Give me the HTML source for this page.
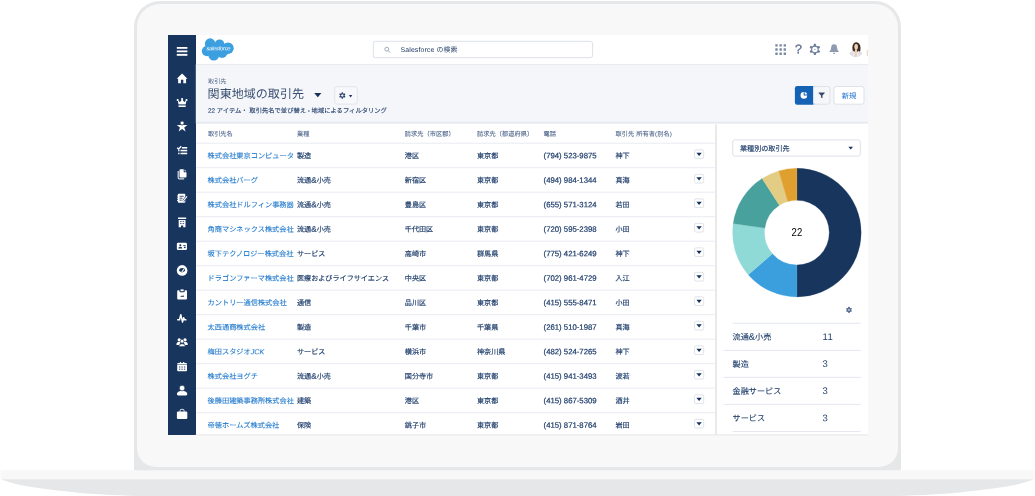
<!DOCTYPE html>
<html lang="ja">
<head>
<meta charset="utf-8">
<title>関東地域の取引先 | Salesforce</title>
<style>
html,body{margin:0;padding:0;background:#fff;}
body{width:1035px;height:496px;position:relative;overflow:hidden;font-family:"Liberation Sans","Noto Sans CJK JP",sans-serif;color:#16325c;-webkit-font-smoothing:antialiased;}
*{box-sizing:border-box;}
.abs{position:absolute;}
#bezel{position:absolute;left:134px;top:1px;width:767px;height:470px;background:#e6e7e9;border-radius:26px 26px 2px 2px;}
#bezelin{position:absolute;left:137px;top:4px;width:761px;height:462.5px;background:#f8f8f8;border-radius:23px 23px 19px 19px;}
#base{position:absolute;left:0;top:470px;width:1035px;height:26px;}
#screen{position:absolute;left:168px;top:35px;width:700px;height:400px;background:#fff;overflow:hidden;filter:blur(0.3px);}
#side{position:absolute;left:0;top:0;width:27.8px;height:100%;background:#18355e;}
#side svg{position:absolute;overflow:visible;}
#hdr{position:absolute;left:27.8px;top:0;right:0;height:29.2px;background:#fff;}
#phdr{position:absolute;left:27.8px;top:30.2px;right:0;height:57px;background:#f4f6f9;}
.t{position:absolute;white-space:nowrap;line-height:1;text-rendering:geometricPrecision;}
.th{font-size:6.2px;color:#4d658b;-webkit-text-stroke:0.08px #4d658b;}
.td{font-size:7.1px;color:#1b3a69;-webkit-text-stroke:0.15px #1b3a69;}
.lk{font-size:7.2px;color:#1f78cc;-webkit-text-stroke:0.1px #1f78cc;}
.ph{font-size:7.75px;color:#1b3a69;-webkit-text-stroke:0.2px #1b3a69;}
.lg{font-size:8.15px;color:#1b3a69;-webkit-text-stroke:0.1px #1b3a69;}
.lgn{font-size:9.5px;color:#1b3a69;}
.amp{font-size:1.15em;line-height:0;}
</style>
</head>
<body>
<div id="bezel"></div>
<div id="bezelin"></div>
<svg id="base" viewBox="0 0 1035 26" width="1035" height="26"><g transform="translate(0,0.25)">
<rect x="0.6" y="0" width="1033.8" height="9.2" rx="1" fill="#f8f8f8"/>
<path d="M0.7,9 L0.7,9.0 L5,10.6 L10,12.0 L15,13.5 L20,14.8 L30,16.6 L40,18.1 L50,19.3 L60,20.4 L70,21.6 L80,22.7 L90,23.5 L100,24.1 L110,24.7 L120,25.1 L130,25.5 L140,25.8 L150,26 L885,26 L885,26 L895,25.8 L905,25.5 L915,25.1 L925,24.7 L935,24.1 L945,23.5 L955,22.7 L965,21.6 L975,20.4 L985,19.3 L995,18.1 L1005,16.6 L1015,14.8 L1020,13.5 L1025,12.0 L1030,10.6 L1034.3,9.0 Z" fill="#e6e7e9"/>
</g></svg>
<div class="abs" style="left:196px;top:435px;width:672px;height:0.8px;background:#f1f1f3"></div>
<div id="screen">

<div id="side"><svg style="left:0;top:0" width="28" height="400" viewBox="0 0 28 400">
<g transform="translate(8.80,12.00) scale(1.0000,1.0000)"><rect x="0" y="0" width="10.6" height="1.8" fill="#fff"/><rect x="0" y="3.45" width="10.6" height="1.8" fill="#fff"/><rect x="0" y="6.9" width="10.6" height="1.9" fill="#fff"/></g>
<g transform="translate(8.50,38.10) scale(0.4667,0.4609)"><path d="M12 1 L23.5 12.2 L20.5 12.2 L20.5 22 L14.6 22 L14.6 14.6 L9.4 14.6 L9.4 22 L3.5 22 L3.5 12.2 L0.5 12.2 Z" fill="#fff"/></g>
<g transform="translate(8.60,62.70) scale(0.5000,0.4947)"><circle cx="2.2" cy="4.6" r="2.1" fill="#fff"/><circle cx="11" cy="2.6" r="2.2" fill="#fff"/><circle cx="19.8" cy="4.6" r="2.1" fill="#fff"/><path d="M2.2 5 L6.6 8.6 L11 3.2 L15.4 8.6 L19.8 5 L18.2 13 L3.8 13 Z" fill="#fff"/><rect x="3.8" y="14.4" width="14.4" height="1.5" fill="#fff"/><rect x="3.8" y="16.8" width="14.4" height="2" fill="#fff"/></g>
<g transform="translate(8.70,86.00) scale(0.4909,0.4909)"><path d="M0.2 8.2 L21.8 8.2 L15.4 13.2 L18 21.6 L11 16.4 L4 21.6 L6.6 13.2 Z" fill="#fff"/><circle cx="11" cy="4.2" r="4.1" fill="#fff" stroke="#18355e" stroke-width="1.6"/></g>
<g transform="translate(9.00,110.90) scale(0.5000,0.5000)"><path d="M0.4 3.8 L3.2 6.4 L8.4 0.8" fill="none" stroke="#fff" stroke-width="2.6"/><rect x="9.8" y="2.2" width="10.6" height="3.1" fill="#fff"/><rect x="2" y="7.8" width="3.2" height="3.1" fill="#fff" opacity=".85"/><rect x="7" y="7.8" width="13.4" height="3.1" fill="#fff"/><rect x="2" y="13.6" width="3.2" height="3.1" fill="#fff" opacity=".85"/><rect x="7" y="13.6" width="13.4" height="3.1" fill="#fff"/></g>
<g transform="translate(8.90,134.00) scale(0.5000,0.5000)"><path d="M2.6 4 L2.6 17.4 Q2.6 19.6 4.8 19.6 L14.5 19.6" fill="none" stroke="#fff" stroke-width="2.4" opacity=".85"/><path d="M7 0.6 L13.6 0.6 L13.6 5.4 Q13.6 6.4 14.6 6.4 L19.2 6.4 L19.2 15 Q19.2 16.8 17.4 16.8 L7 16.8 Q5.2 16.8 5.2 15 L5.2 2.4 Q5.2 0.6 7 0.6 Z" fill="#fff"/><path d="M15.4 0.9 L19 4.6 L15.4 4.6 Z" fill="#fff"/></g>
<g transform="translate(9.00,158.30) scale(0.5000,0.5000)"><path d="M3.6 0.8 L14.6 0.8 Q16.6 0.8 16.6 2.8 L16.6 16.8 Q16.6 18.8 14.6 18.8 L3.6 18.8 Q1.6 18.8 1.6 16.8 L1.6 15.4 L0.4 15.4 L0.4 13.2 L1.6 13.2 L1.6 10.9 L0.4 10.9 L0.4 8.7 L1.6 8.7 L1.6 6.4 L0.4 6.4 L0.4 4.2 L1.6 4.2 L1.6 2.8 Q1.6 0.8 3.6 0.8 Z" fill="#fff"/><rect x="5" y="5" width="8.4" height="1.7" fill="#18355e"/><rect x="5" y="8.9" width="6" height="1.7" fill="#18355e"/><rect x="5" y="12.8" width="4.4" height="1.7" fill="#18355e"/><path d="M12.4 15.4 L20 6.2" stroke="#18355e" stroke-width="4.6" fill="none"/><path d="M12.6 15.2 L20 6.2" stroke="#fff" stroke-width="2.3" fill="none"/></g>
<g transform="translate(9.90,182.30) scale(0.5000,0.5000)"><rect x="0.2" y="0.2" width="16.4" height="3.3" rx="0.6" fill="#fff"/><path d="M1.6 5.2 L15.2 5.2 L15.2 20 L10.6 20 L10.6 16.2 L6.2 16.2 L6.2 20 L1.6 20 Z" fill="#fff"/><rect x="4.4" y="7.2" width="3" height="2.2" fill="#18355e" opacity=".75"/><rect x="9.4" y="7.2" width="3" height="2.2" fill="#18355e" opacity=".75"/><rect x="4.4" y="11.4" width="3" height="2.2" fill="#18355e" opacity=".75"/><rect x="9.4" y="11.4" width="3" height="2.2" fill="#18355e" opacity=".75"/></g>
<g transform="translate(8.70,207.60) scale(0.5000,0.5000)"><rect x="0.3" y="0.3" width="20.2" height="14.6" rx="2.4" fill="#fff"/><circle cx="7.2" cy="5.2" r="2.1" fill="#18355e"/><path d="M3.2 11.8 Q3.2 8.4 7.2 8.4 Q11.2 8.4 11.2 11.8 Z" fill="#18355e"/><rect x="13" y="5" width="4.8" height="1.6" fill="#18355e"/><rect x="14.4" y="8.2" width="3.4" height="2.8" fill="#18355e"/></g>
<g transform="translate(8.70,230.00) scale(0.5000,0.5000)"><circle cx="10.8" cy="10.8" r="10.6" fill="#fff"/><path d="M4.7 12 A6.1 6.1 0 0 1 16.9 12 Q14 12.3 12.4 14.6 L9.2 14.6 Q7.6 12.3 4.7 12 Z" fill="#18355e"/><path d="M9.4 13.2 L14 7.4 L15.4 8.5 L11.2 14.6 Z" fill="#fff"/></g>
<g transform="translate(9.00,254.00) scale(0.5000,0.5000)"><path d="M2.4 2.6 L5 2.6 L5 4.4 Q5 6.4 7 6.4 L13.4 6.4 Q15.4 6.4 15.4 4.4 L15.4 2.6 L18 2.6 Q20 2.6 20 4.6 L20 19.2 Q20 21.2 18 21.2 L2.4 21.2 Q0.4 21.2 0.4 19.2 L0.4 4.6 Q0.4 2.6 2.4 2.6 Z" fill="#fff"/><rect x="6.4" y="0.2" width="7.6" height="4.8" rx="1.6" fill="#fff" stroke="#18355e" stroke-width="1.3"/><path d="M6.4 15.8 L8.6 13.2 L10.6 14.4 L12.2 11.6 L14.6 15.8 Z" fill="#18355e" opacity=".8"/></g>
<g transform="translate(8.90,278.90) scale(0.5000,0.5000)"><path d="M0.6 11.6 L5.2 11.6 L7.8 1.6 L11.2 16.4 L13.6 7.6 L15.2 11.6 L19 11.6" fill="none" stroke="#fff" stroke-width="2.9" stroke-linejoin="round"/></g>
<g transform="translate(8.20,302.70) scale(0.5000,0.5000)"><circle cx="6" cy="4.2" r="3.3" fill="#fff"/><circle cx="17.6" cy="4.2" r="3.3" fill="#fff"/><path d="M0.4 12.2 Q1.4 8 6 8 Q8 8 8.6 9 L6 14.4 L0.8 14.4 Z" fill="#fff"/><path d="M23.2 12.2 Q22.2 8 17.6 8 Q15.6 8 15 9 L17.6 14.4 L22.8 14.4 Z" fill="#fff"/><circle cx="11.8" cy="7" r="3.7" fill="#fff" stroke="#18355e" stroke-width="1.2"/><path d="M5.4 17.8 Q5.6 12.6 11.8 12.2 Q18 12.6 18.2 17.8 Z" fill="#fff" stroke="#18355e" stroke-width="1"/></g>
<g transform="translate(9.00,326.60) scale(0.5000,0.5000)"><path d="M2.4 2.6 L5 2.6 L7 0.4 L9 2.6 L11.4 2.6 L13.4 0.4 L15.4 2.6 L18 2.6 Q20 2.6 20 4.6 L20 5.6 L0.4 5.6 L0.4 4.6 Q0.4 2.6 2.4 2.6 Z" fill="#fff"/><path d="M0.4 7 L20 7 L20 17.2 Q20 19.2 18 19.2 L2.4 19.2 Q0.4 19.2 0.4 17.2 Z" fill="#fff"/><g fill="#18355e" opacity=".8"><rect x="4" y="9.6" width="2.6" height="2.4"/><rect x="8.9" y="9.6" width="2.6" height="2.4"/><rect x="13.8" y="9.6" width="2.6" height="2.4"/><rect x="4" y="14" width="2.6" height="2.4"/><rect x="8.9" y="14" width="2.6" height="2.4"/><rect x="13.8" y="14" width="2.6" height="2.4"/></g></g>
<g transform="translate(8.70,350.30) scale(0.5000,0.5000)"><path d="M0.4 17.6 Q0.8 12.8 7.4 11.6 L14.2 11.6 Q20.8 12.8 21.2 17.6 Q21.2 20.4 18.6 20.4 L3 20.4 Q0.4 20.4 0.4 17.6 Z" fill="#fff"/><circle cx="10.8" cy="5.6" r="5.6" fill="#fff" stroke="#18355e" stroke-width="1.4"/></g>
<g transform="translate(8.70,373.90) scale(0.5000,0.5000)"><path d="M6.8 5.6 L6.8 3.4 Q6.8 1 9.2 1 L12.4 1 Q14.8 1 14.8 3.4 L14.8 5.6" fill="none" stroke="#fff" stroke-width="1.8"/><rect x="0.4" y="5.4" width="20.8" height="15" rx="2.2" fill="#fff"/></g>
</svg></div>
<div id="hdr"></div>
<div id="phdr"></div>
<svg class="abs" style="left:0;top:0" width="700" height="400" viewBox="0 0 700 400"><rect x="27.8" y="29.10" width="673" height="1.5" fill="#e6e9f0"/><rect x="27.8" y="30.20" width="673" height="56.6" fill="#f4f6f9"/><rect x="27.8" y="86.70" width="673" height="2.0" fill="#e7eaf0"/><rect x="27.8" y="399.1" width="673" height="1" fill="#eeeef1"/><g transform="translate(33.80,3.40) scale(0.07257)" fill="#3b9fe0"><circle cx="115" cy="72" r="73"/><circle cx="245" cy="80" r="65"/><circle cx="360" cy="135" r="80"/><circle cx="70" cy="175" r="70"/><circle cx="165" cy="230" r="75"/><circle cx="280" cy="200" r="70"/><rect x="70" y="80" width="290" height="140"/></g><rect x="205.30" y="6.30" width="219.30" height="16.40" rx="2.2" fill="#fff" stroke="#dce0e8" stroke-width="1.0"/><rect x="698.80" y="15.10" width="1.3" height="5.8" rx="0.5" fill="#e6dbd0"/><rect x="166.70" y="51.70" width="22.60" height="17.40" rx="2.4" fill="#f7f8fb" stroke="#e1e5eb" stroke-width="1.0"/><rect x="645.50" y="51.55" width="16.40" height="17.65" rx="2.2" fill="#f6f7f9" stroke="#dde1e8" stroke-width="1.0"/><rect x="626.90" y="51.05" width="20.10" height="18.65" rx="2.2" fill="#1561b4"/><rect x="645.15" y="52.05" width="2.85" height="16.65" rx="0" fill="#f6f7f9"/><rect x="645.15" y="51.05" width="3" height="1" fill="#dde1e8"/><rect x="645.15" y="68.70" width="3" height="1" fill="#dde1e8"/><rect x="665.90" y="51.55" width="30.10" height="17.65" rx="2.2" fill="#fff" stroke="#dde1e8" stroke-width="1.0"/><rect x="28.00" y="107.65" width="519.50" height="1.1" fill="#eaedf3"/><rect x="526.50" y="114.85" width="9.20" height="8.70" rx="1.6" fill="#fff" stroke="#dfe3ea" stroke-width="1.0"/><path d="M528.40,117.65 h5.4 l-2.7,3.3 Z" fill="#16325c"/><rect x="28.00" y="132.15" width="519.50" height="1.1" fill="#eaedf3"/><rect x="526.50" y="139.35" width="9.20" height="8.70" rx="1.6" fill="#fff" stroke="#dfe3ea" stroke-width="1.0"/><path d="M528.40,142.15 h5.4 l-2.7,3.3 Z" fill="#16325c"/><rect x="28.00" y="156.65" width="519.50" height="1.1" fill="#eaedf3"/><rect x="526.50" y="163.85" width="9.20" height="8.70" rx="1.6" fill="#fff" stroke="#dfe3ea" stroke-width="1.0"/><path d="M528.40,166.65 h5.4 l-2.7,3.3 Z" fill="#16325c"/><rect x="28.00" y="181.15" width="519.50" height="1.1" fill="#eaedf3"/><rect x="526.50" y="188.35" width="9.20" height="8.70" rx="1.6" fill="#fff" stroke="#dfe3ea" stroke-width="1.0"/><path d="M528.40,191.15 h5.4 l-2.7,3.3 Z" fill="#16325c"/><rect x="28.00" y="205.65" width="519.50" height="1.1" fill="#eaedf3"/><rect x="526.50" y="212.85" width="9.20" height="8.70" rx="1.6" fill="#fff" stroke="#dfe3ea" stroke-width="1.0"/><path d="M528.40,215.65 h5.4 l-2.7,3.3 Z" fill="#16325c"/><rect x="28.00" y="230.15" width="519.50" height="1.1" fill="#eaedf3"/><rect x="526.50" y="237.35" width="9.20" height="8.70" rx="1.6" fill="#fff" stroke="#dfe3ea" stroke-width="1.0"/><path d="M528.40,240.15 h5.4 l-2.7,3.3 Z" fill="#16325c"/><rect x="28.00" y="254.65" width="519.50" height="1.1" fill="#eaedf3"/><rect x="526.50" y="261.85" width="9.20" height="8.70" rx="1.6" fill="#fff" stroke="#dfe3ea" stroke-width="1.0"/><path d="M528.40,264.65 h5.4 l-2.7,3.3 Z" fill="#16325c"/><rect x="28.00" y="279.15" width="519.50" height="1.1" fill="#eaedf3"/><rect x="526.50" y="286.35" width="9.20" height="8.70" rx="1.6" fill="#fff" stroke="#dfe3ea" stroke-width="1.0"/><path d="M528.40,289.15 h5.4 l-2.7,3.3 Z" fill="#16325c"/><rect x="28.00" y="303.65" width="519.50" height="1.1" fill="#eaedf3"/><rect x="526.50" y="310.85" width="9.20" height="8.70" rx="1.6" fill="#fff" stroke="#dfe3ea" stroke-width="1.0"/><path d="M528.40,313.65 h5.4 l-2.7,3.3 Z" fill="#16325c"/><rect x="28.00" y="328.15" width="519.50" height="1.1" fill="#eaedf3"/><rect x="526.50" y="335.35" width="9.20" height="8.70" rx="1.6" fill="#fff" stroke="#dfe3ea" stroke-width="1.0"/><path d="M528.40,338.15 h5.4 l-2.7,3.3 Z" fill="#16325c"/><rect x="28.00" y="352.65" width="519.50" height="1.1" fill="#eaedf3"/><rect x="526.50" y="359.85" width="9.20" height="8.70" rx="1.6" fill="#fff" stroke="#dfe3ea" stroke-width="1.0"/><path d="M528.40,362.65 h5.4 l-2.7,3.3 Z" fill="#16325c"/><rect x="28.00" y="377.15" width="519.50" height="1.1" fill="#eaedf3"/><rect x="526.50" y="384.35" width="9.20" height="8.70" rx="1.6" fill="#fff" stroke="#dfe3ea" stroke-width="1.0"/><path d="M528.40,387.15 h5.4 l-2.7,3.3 Z" fill="#16325c"/><rect x="547.10" y="89.60" width="1.8" height="320" fill="#e7e7e8"/><rect x="564.70" y="104.90" width="127.60" height="16.20" rx="2.2" fill="#fff" stroke="#dce0e8" stroke-width="1.0"/><rect x="564.60" y="287.75" width="128.00" height="1.1" fill="#e6e9f1"/><rect x="555.60" y="314.85" width="137.00" height="1.1" fill="#e6e9f1"/><rect x="555.60" y="341.85" width="137.00" height="1.1" fill="#e6e9f1"/><rect x="555.60" y="368.85" width="137.00" height="1.1" fill="#e6e9f1"/><rect x="564.60" y="395.95" width="128.00" height="1.1" fill="#e6e9f1"/><g transform="translate(216.20,11.60) scale(0.53333,0.53333) translate(-0.00,-0.00)"><circle cx="4.8" cy="4.8" r="3.6" fill="none" stroke="#8a96ab" stroke-width="1.5"/><path d="M7.4 7.4 L11.2 11.2" stroke="#8a96ab" stroke-width="1.7"/></g><g transform="translate(607.30,9.20) scale(1.00000,1.00000) translate(-0.00,-0.00)"><rect x="0" y="0" width="2.4" height="2.4" rx="0.3" fill="#7888a4"/><rect x="0" y="4.15" width="2.4" height="2.4" rx="0.3" fill="#7888a4"/><rect x="0" y="8.3" width="2.4" height="2.4" rx="0.3" fill="#7888a4"/><rect x="4.15" y="0" width="2.4" height="2.4" rx="0.3" fill="#7888a4"/><rect x="4.15" y="4.15" width="2.4" height="2.4" rx="0.3" fill="#7888a4"/><rect x="4.15" y="8.3" width="2.4" height="2.4" rx="0.3" fill="#7888a4"/><rect x="8.3" y="0" width="2.4" height="2.4" rx="0.3" fill="#7888a4"/><rect x="8.3" y="4.15" width="2.4" height="2.4" rx="0.3" fill="#7888a4"/><rect x="8.3" y="8.3" width="2.4" height="2.4" rx="0.3" fill="#7888a4"/></g><g transform="translate(641.30,8.80) scale(1.00000,1.00000) translate(5.60,5.60)"><path d="M-0.8,-5.55 L0.8,-5.55 L1.5,-3.5 L-1.5,-3.5 Z" fill="#6a7b9a" transform="rotate(0)"/><path d="M-0.8,-5.55 L0.8,-5.55 L1.5,-3.5 L-1.5,-3.5 Z" fill="#6a7b9a" transform="rotate(60)"/><path d="M-0.8,-5.55 L0.8,-5.55 L1.5,-3.5 L-1.5,-3.5 Z" fill="#6a7b9a" transform="rotate(120)"/><path d="M-0.8,-5.55 L0.8,-5.55 L1.5,-3.5 L-1.5,-3.5 Z" fill="#6a7b9a" transform="rotate(180)"/><path d="M-0.8,-5.55 L0.8,-5.55 L1.5,-3.5 L-1.5,-3.5 Z" fill="#6a7b9a" transform="rotate(240)"/><path d="M-0.8,-5.55 L0.8,-5.55 L1.5,-3.5 L-1.5,-3.5 Z" fill="#6a7b9a" transform="rotate(300)"/><circle r="3.25" fill="none" stroke="#6a7b9a" stroke-width="1.05"/><circle r="0.7" fill="#6a7b9a" opacity=".7"/></g><g transform="translate(661.20,9.00) scale(0.50000,0.50000) translate(-0.00,-0.00)"><path d="M9.8 0.6 Q15.4 0.8 15.6 7 Q15.8 12.2 19 14.6 L19 15.8 L0.6 15.8 L0.6 14.6 Q3.8 12.2 4 7 Q4.2 0.8 9.8 0.6 Z" fill="#8e9ab0"/><path d="M7.4 17.4 L12.2 17.4 Q12 20 9.8 20 Q7.6 20 7.4 17.4 Z" fill="#8e9ab0"/></g><g transform="translate(680.10,6.70) scale(0.51333,0.51333) translate(-0.00,-0.00)">
<defs><clipPath id="av"><circle cx="15" cy="15" r="15"/></clipPath></defs>
<g clip-path="url(#av)"><rect width="30" height="30" fill="#fff"/>
<path d="M0 30 Q1 20.5 10 17.6 L15 22 L21 17.6 Q29 20.5 30 30 Z" fill="#dddde2"/>
<path d="M9.6 19 Q6.4 8 11 3.4 Q16 -1 21 3.6 Q25.6 8 23.6 18.6 L20 19.4 L12 19.4 Z" fill="#3d2a21"/>
<ellipse cx="15.7" cy="9.8" rx="3.5" ry="5.6" fill="#f0d3b8"/>
<path d="M12 5.6 Q15.6 2.6 19.6 6.4 Q18 2.6 15.4 2.8 Q12.8 3 12 5.6 Z" fill="#3d2a21"/>
<path d="M13.4 14.6 L17.6 14.6 L17 22 L16.4 30 L12.4 30 L13 22 Z" fill="#efcdae"/>
<path d="M10 17.8 L13.2 20 L12.4 30 L9 30 Z" fill="#e9e9ee"/><path d="M21 17.8 L17.4 20 L16.8 30 L21 30 Z" fill="#e9e9ee"/>
</g></g><g transform="translate(146.20,58.00) scale(1.00000,1.00000) translate(-0.00,-0.00)"><path d="M0 0 L7.2 0 L3.6 4.2 Z" fill="#16325c"/></g><g transform="translate(171.00,57.20) scale(1.00000,1.00000) translate(3.30,3.30)"><path d="M-0.45,-3.3 L0.45,-3.3 L1.1,-1.7 L-1.1,-1.7 Z" fill="#1d3760" transform="rotate(0)"/><path d="M-0.45,-3.3 L0.45,-3.3 L1.1,-1.7 L-1.1,-1.7 Z" fill="#1d3760" transform="rotate(60)"/><path d="M-0.45,-3.3 L0.45,-3.3 L1.1,-1.7 L-1.1,-1.7 Z" fill="#1d3760" transform="rotate(120)"/><path d="M-0.45,-3.3 L0.45,-3.3 L1.1,-1.7 L-1.1,-1.7 Z" fill="#1d3760" transform="rotate(180)"/><path d="M-0.45,-3.3 L0.45,-3.3 L1.1,-1.7 L-1.1,-1.7 Z" fill="#1d3760" transform="rotate(240)"/><path d="M-0.45,-3.3 L0.45,-3.3 L1.1,-1.7 L-1.1,-1.7 Z" fill="#1d3760" transform="rotate(300)"/><circle r="1.65" fill="none" stroke="#1d3760" stroke-width="1.0"/></g><g transform="translate(180.90,60.10) scale(1.00000,1.00000) translate(-0.00,-0.00)"><path d="M0 0 L3.4 0 L1.7 2.3 Z" fill="#1d3760"/></g><g transform="translate(632.45,57.00) scale(0.50000,0.50000) translate(-0.00,-0.00)"><circle cx="6.8" cy="6.8" r="6.6" fill="#fff"/><path d="M7.5 0.4 L7.5 6.1 L13.2 6.1" fill="none" stroke="#1561b4" stroke-width="2.1"/></g><g transform="translate(650.55,57.40) scale(0.46324,0.45455) translate(-0.00,-0.00)"><path d="M0.4 0.4 L13.2 0.4 L13.2 1.6 L8.4 6.8 L8.4 12.8 L5.2 11 L5.2 6.8 L0.4 1.6 Z" fill="#394b6b"/></g><g transform="translate(680.40,111.70) scale(1.00000,1.00000) translate(-0.00,-0.00)"><path d="M0 0 L4.6 0 L2.3 2.8 Z" fill="#16325c"/></g><g transform="translate(677.90,271.80) scale(1.00000,1.00000) translate(3.10,3.10)" opacity=".9"><path d="M-0.5,-3.05 L0.5,-3.05 L1.15,-1.6 L-1.15,-1.6 Z" fill="#3a5580" transform="rotate(0)"/><path d="M-0.5,-3.05 L0.5,-3.05 L1.15,-1.6 L-1.15,-1.6 Z" fill="#3a5580" transform="rotate(60)"/><path d="M-0.5,-3.05 L0.5,-3.05 L1.15,-1.6 L-1.15,-1.6 Z" fill="#3a5580" transform="rotate(120)"/><path d="M-0.5,-3.05 L0.5,-3.05 L1.15,-1.6 L-1.15,-1.6 Z" fill="#3a5580" transform="rotate(180)"/><path d="M-0.5,-3.05 L0.5,-3.05 L1.15,-1.6 L-1.15,-1.6 Z" fill="#3a5580" transform="rotate(240)"/><path d="M-0.5,-3.05 L0.5,-3.05 L1.15,-1.6 L-1.15,-1.6 Z" fill="#3a5580" transform="rotate(300)"/><circle r="1.7" fill="#9fb0c9" stroke="#3a5580" stroke-width="1.0"/></g></svg>
<div class="t" style="left:38px;top:12px;transform:translate(0.40px,0.30px) rotate(0.04deg);font-size:5.7px;font-style:italic;color:#fff;letter-spacing:-0.2px;font-family:'Liberation Sans',sans-serif">salesforce</div>
<div class="t" style="left:232px;top:13px;transform:translate(0.60px,0.10px) rotate(0.04deg);font-size:6.9px;color:#16325c;letter-spacing:0.12px">Salesforce の検索</div>
<div class="t" style="left:627px;top:8px;transform:translate(0.00px,0.20px) rotate(0.04deg);font-size:12.4px;color:#5f7192;-webkit-text-stroke:0.35px #5f7192;font-family:'Liberation Sans',sans-serif">?</div>
<div class="t" style="left:40px;top:44px;transform:translate(0.00px,0.40px) rotate(0.04deg);font-size:6.2px;color:#54698d">取引先</div>
<div class="t" style="left:39px;top:53px;transform:translate(0.60px,0.05px) rotate(0.04deg);font-size:12.05px;color:#3a5072;font-weight:400">関東地域の取引先</div>
<div class="t" style="left:40px;top:73px;transform:translate(0.00px,0.70px) rotate(0.04deg);font-size:6.31px;color:#2c4772;-webkit-text-stroke:0.15px #2c4772">22 アイテム・ 取引先名で並び替え - 地域によるフィルタリング</div>
<div class="t" style="left:673px;top:57px;transform:translate(0.70px,0.40px) rotate(0.04deg);font-size:7.4px;color:#1a6fd0">新規</div>
<div class="t th" style="left:40px;top:97px;transform:translate(0.00px,0.05px) rotate(0.04deg)">取引先名</div>
<div class="t th" style="left:129px;top:97px;transform:translate(0.00px,0.05px) rotate(0.04deg)">業種</div>
<div class="t th" style="left:236px;top:97px;transform:translate(0.80px,0.05px) rotate(0.04deg);letter-spacing:0.05px">請求先（市区郡）</div>
<div class="t th" style="left:309px;top:97px;transform:translate(0.00px,0.05px) rotate(0.04deg);letter-spacing:0.05px">請求先（都道府県）</div>
<div class="t th" style="left:375px;top:97px;transform:translate(0.60px,0.05px) rotate(0.04deg)">電話</div>
<div class="t th" style="left:447px;top:97px;transform:translate(0.50px,0.05px) rotate(0.04deg);letter-spacing:0.1px">取引先 所有者(別名)</div>
<div class="t lk" style="left:39px;top:117px;transform:translate(0.60px,0.35px) rotate(0.04deg)">株式会社東京コンピュータ</div>
<div class="t td" style="left:129px;top:118px;transform:translate(0.00px,0.35px) rotate(0.04deg)">製造</div>
<div class="t td" style="left:236px;top:118px;transform:translate(0.80px,0.35px) rotate(0.04deg)">港区</div>
<div class="t td" style="left:309px;top:118px;transform:translate(0.00px,0.35px) rotate(0.04deg)">東京都</div>
<div class="t ph" style="left:375px;top:117px;transform:translate(0.60px,0.35px) rotate(0.04deg)">(794) 523-9875</div>
<div class="t td" style="left:447px;top:118px;transform:translate(0.50px,0.35px) rotate(0.04deg)">神下</div>
<div class="t lk" style="left:39px;top:141px;transform:translate(0.60px,0.85px) rotate(0.04deg)">株式会社バーグ</div>
<div class="t td" style="left:129px;top:142px;transform:translate(0.00px,0.85px) rotate(0.04deg)">流通<span class="amp">&amp;</span>小売</div>
<div class="t td" style="left:236px;top:142px;transform:translate(0.80px,0.85px) rotate(0.04deg)">新宿区</div>
<div class="t td" style="left:309px;top:142px;transform:translate(0.00px,0.85px) rotate(0.04deg)">東京都</div>
<div class="t ph" style="left:375px;top:141px;transform:translate(0.60px,0.85px) rotate(0.04deg)">(494) 984-1344</div>
<div class="t td" style="left:447px;top:142px;transform:translate(0.50px,0.85px) rotate(0.04deg)">真海</div>
<div class="t lk" style="left:39px;top:166px;transform:translate(0.60px,0.35px) rotate(0.04deg)">株式会社ドルフィン事務器</div>
<div class="t td" style="left:129px;top:167px;transform:translate(0.00px,0.35px) rotate(0.04deg)">流通<span class="amp">&amp;</span>小売</div>
<div class="t td" style="left:236px;top:167px;transform:translate(0.80px,0.35px) rotate(0.04deg)">豊島区</div>
<div class="t td" style="left:309px;top:167px;transform:translate(0.00px,0.35px) rotate(0.04deg)">東京都</div>
<div class="t ph" style="left:375px;top:166px;transform:translate(0.60px,0.35px) rotate(0.04deg)">(655) 571-3124</div>
<div class="t td" style="left:447px;top:167px;transform:translate(0.50px,0.35px) rotate(0.04deg)">若田</div>
<div class="t lk" style="left:39px;top:190px;transform:translate(0.60px,0.85px) rotate(0.04deg)">角商マシネックス株式会社</div>
<div class="t td" style="left:129px;top:191px;transform:translate(0.00px,0.85px) rotate(0.04deg)">流通<span class="amp">&amp;</span>小売</div>
<div class="t td" style="left:236px;top:191px;transform:translate(0.80px,0.85px) rotate(0.04deg)">千代田区</div>
<div class="t td" style="left:309px;top:191px;transform:translate(0.00px,0.85px) rotate(0.04deg)">東京都</div>
<div class="t ph" style="left:375px;top:190px;transform:translate(0.60px,0.85px) rotate(0.04deg)">(720) 595-2398</div>
<div class="t td" style="left:447px;top:191px;transform:translate(0.50px,0.85px) rotate(0.04deg)">小田</div>
<div class="t lk" style="left:39px;top:215px;transform:translate(0.60px,0.35px) rotate(0.04deg)">坂下テクノロジー株式会社</div>
<div class="t td" style="left:129px;top:216px;transform:translate(0.00px,0.35px) rotate(0.04deg)">サービス</div>
<div class="t td" style="left:236px;top:216px;transform:translate(0.80px,0.35px) rotate(0.04deg)">高崎市</div>
<div class="t td" style="left:309px;top:216px;transform:translate(0.00px,0.35px) rotate(0.04deg)">群馬県</div>
<div class="t ph" style="left:375px;top:215px;transform:translate(0.60px,0.35px) rotate(0.04deg)">(775) 421-6249</div>
<div class="t td" style="left:447px;top:216px;transform:translate(0.50px,0.35px) rotate(0.04deg)">神下</div>
<div class="t lk" style="left:39px;top:239px;transform:translate(0.60px,0.85px) rotate(0.04deg)">ドラゴンファーマ株式会社</div>
<div class="t td" style="left:129px;top:240px;transform:translate(0.00px,0.85px) rotate(0.04deg)">医療およびライフサイエンス</div>
<div class="t td" style="left:236px;top:240px;transform:translate(0.80px,0.85px) rotate(0.04deg)">中央区</div>
<div class="t td" style="left:309px;top:240px;transform:translate(0.00px,0.85px) rotate(0.04deg)">東京都</div>
<div class="t ph" style="left:375px;top:239px;transform:translate(0.60px,0.85px) rotate(0.04deg)">(702) 961-4729</div>
<div class="t td" style="left:447px;top:240px;transform:translate(0.50px,0.85px) rotate(0.04deg)">入江</div>
<div class="t lk" style="left:39px;top:264px;transform:translate(0.60px,0.35px) rotate(0.04deg)">カントリー通信株式会社</div>
<div class="t td" style="left:129px;top:265px;transform:translate(0.00px,0.35px) rotate(0.04deg)">通信</div>
<div class="t td" style="left:236px;top:265px;transform:translate(0.80px,0.35px) rotate(0.04deg)">品川区</div>
<div class="t td" style="left:309px;top:265px;transform:translate(0.00px,0.35px) rotate(0.04deg)">東京都</div>
<div class="t ph" style="left:375px;top:264px;transform:translate(0.60px,0.35px) rotate(0.04deg)">(415) 555-8471</div>
<div class="t td" style="left:447px;top:265px;transform:translate(0.50px,0.35px) rotate(0.04deg)">小田</div>
<div class="t lk" style="left:39px;top:288px;transform:translate(0.60px,0.85px) rotate(0.04deg)">太西通商株式会社</div>
<div class="t td" style="left:129px;top:289px;transform:translate(0.00px,0.85px) rotate(0.04deg)">製造</div>
<div class="t td" style="left:236px;top:289px;transform:translate(0.80px,0.85px) rotate(0.04deg)">千葉市</div>
<div class="t td" style="left:309px;top:289px;transform:translate(0.00px,0.85px) rotate(0.04deg)">千葉県</div>
<div class="t ph" style="left:375px;top:288px;transform:translate(0.60px,0.85px) rotate(0.04deg)">(261) 510-1987</div>
<div class="t td" style="left:447px;top:289px;transform:translate(0.50px,0.85px) rotate(0.04deg)">真海</div>
<div class="t lk" style="left:39px;top:313px;transform:translate(0.60px,0.35px) rotate(0.04deg)">梅田スタジオ<i>JCK</i></div>
<div class="t td" style="left:129px;top:314px;transform:translate(0.00px,0.35px) rotate(0.04deg)">サービス</div>
<div class="t td" style="left:236px;top:314px;transform:translate(0.80px,0.35px) rotate(0.04deg)">横浜市</div>
<div class="t td" style="left:309px;top:314px;transform:translate(0.00px,0.35px) rotate(0.04deg)">神奈川県</div>
<div class="t ph" style="left:375px;top:313px;transform:translate(0.60px,0.35px) rotate(0.04deg)">(482) 524-7265</div>
<div class="t td" style="left:447px;top:314px;transform:translate(0.50px,0.35px) rotate(0.04deg)">神下</div>
<div class="t lk" style="left:39px;top:337px;transform:translate(0.60px,0.85px) rotate(0.04deg)">株式会社ヨグチ</div>
<div class="t td" style="left:129px;top:338px;transform:translate(0.00px,0.85px) rotate(0.04deg)">流通<span class="amp">&amp;</span>小売</div>
<div class="t td" style="left:236px;top:338px;transform:translate(0.80px,0.85px) rotate(0.04deg)">国分寺市</div>
<div class="t td" style="left:309px;top:338px;transform:translate(0.00px,0.85px) rotate(0.04deg)">東京都</div>
<div class="t ph" style="left:375px;top:337px;transform:translate(0.60px,0.85px) rotate(0.04deg)">(415) 941-3493</div>
<div class="t td" style="left:447px;top:338px;transform:translate(0.50px,0.85px) rotate(0.04deg)">波若</div>
<div class="t lk" style="left:39px;top:362px;transform:translate(0.60px,0.35px) rotate(0.04deg)">後藤田建築事務所株式会社</div>
<div class="t td" style="left:129px;top:363px;transform:translate(0.00px,0.35px) rotate(0.04deg)">建築</div>
<div class="t td" style="left:236px;top:363px;transform:translate(0.80px,0.35px) rotate(0.04deg)">港区</div>
<div class="t td" style="left:309px;top:363px;transform:translate(0.00px,0.35px) rotate(0.04deg)">東京都</div>
<div class="t ph" style="left:375px;top:362px;transform:translate(0.60px,0.35px) rotate(0.04deg)">(415) 867-5309</div>
<div class="t td" style="left:447px;top:363px;transform:translate(0.50px,0.35px) rotate(0.04deg)">酒井</div>
<div class="t lk" style="left:39px;top:386px;transform:translate(0.60px,0.85px) rotate(0.04deg)">帝徳ホームズ株式会社</div>
<div class="t td" style="left:129px;top:387px;transform:translate(0.00px,0.85px) rotate(0.04deg)">保険</div>
<div class="t td" style="left:236px;top:387px;transform:translate(0.80px,0.85px) rotate(0.04deg)">銚子市</div>
<div class="t td" style="left:309px;top:387px;transform:translate(0.00px,0.85px) rotate(0.04deg)">東京都</div>
<div class="t ph" style="left:375px;top:386px;transform:translate(0.60px,0.85px) rotate(0.04deg)">(415) 871-8764</div>
<div class="t td" style="left:447px;top:387px;transform:translate(0.50px,0.85px) rotate(0.04deg)">岩田</div>
<div class="t td" style="left:572px;top:111px;transform:translate(0.00px,0.05px) rotate(0.04deg)">業種別の取引先</div>
<svg class="abs" style="left:0;top:0" width="700" height="400" viewBox="0 0 700 400"><path d="M628.90,133.30 A64.3,64.3 0 0 1 628.90,261.90 L628.90,230.00 A32.4,32.4 0 0 0 628.90,165.20 Z" fill="#18355e" stroke="#18355e" stroke-width="0.3"/><path d="M628.90,261.90 A64.3,64.3 0 0 1 580.31,239.71 L604.41,218.82 A32.4,32.4 0 0 0 628.90,230.00 Z" fill="#3b9fdd" stroke="#3b9fdd" stroke-width="0.3"/><path d="M580.31,239.71 A64.3,64.3 0 0 1 565.25,188.45 L596.83,192.99 A32.4,32.4 0 0 0 604.41,218.82 Z" fill="#8fd9d6" stroke="#8fd9d6" stroke-width="0.3"/><path d="M565.25,188.45 A64.3,64.3 0 0 1 594.14,143.51 L611.38,170.34 A32.4,32.4 0 0 0 596.83,192.99 Z" fill="#48a19c" stroke="#48a19c" stroke-width="0.3"/><path d="M594.14,143.51 A64.3,64.3 0 0 1 610.78,135.90 L619.77,166.51 A32.4,32.4 0 0 0 611.38,170.34 Z" fill="#e3cd84" stroke="#e3cd84" stroke-width="0.3"/><path d="M610.78,135.90 A64.3,64.3 0 0 1 628.90,133.30 L628.90,165.20 A32.4,32.4 0 0 0 619.77,166.51 Z" fill="#e0a02f" stroke="#e0a02f" stroke-width="0.3"/><text x="628.90" y="200.80" font-family="Liberation Sans, sans-serif" font-size="10.8" fill="#000" text-anchor="middle" textLength="10.6" lengthAdjust="spacingAndGlyphs">22</text></svg>
<div class="t lg" style="left:564px;top:298px;transform:translate(0.60px,0.85px) rotate(0.04deg)">流通<span class="amp">&amp;</span>小売</div>
<div class="t lgn" style="left:654px;top:298px;transform:translate(0.60px,0.05px) rotate(0.04deg);letter-spacing:0.2px">11</div>
<div class="t lg" style="left:564px;top:325px;transform:translate(0.60px,0.90px) rotate(0.04deg)">製造</div>
<div class="t lgn" style="left:654px;top:325px;transform:translate(0.60px,0.10px) rotate(0.04deg);letter-spacing:0.2px">3</div>
<div class="t lg" style="left:564px;top:352px;transform:translate(0.60px,0.90px) rotate(0.04deg)">金融サービス</div>
<div class="t lgn" style="left:654px;top:352px;transform:translate(0.60px,0.10px) rotate(0.04deg);letter-spacing:0.2px">3</div>
<div class="t lg" style="left:564px;top:379px;transform:translate(0.60px,0.95px) rotate(0.04deg)">サービス</div>
<div class="t lgn" style="left:654px;top:379px;transform:translate(0.60px,0.15px) rotate(0.04deg);letter-spacing:0.2px">3</div>
</div>
</body>
</html>
